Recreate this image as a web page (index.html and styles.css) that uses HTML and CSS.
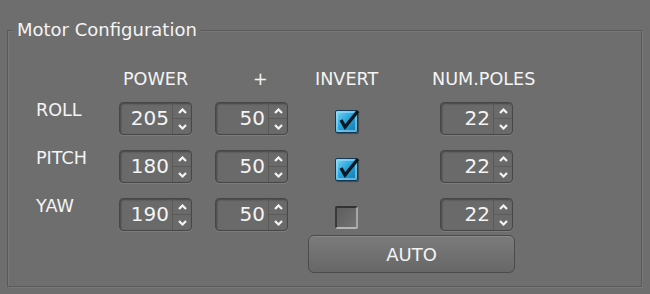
FILE: index.html
```html
<!DOCTYPE html>
<html lang="en">
  <head>
    <meta charset="UTF-8" />
    <title>Motor Configuration</title>
    <link rel="stylesheet" href="styles.css">
  </head>
  <body>
    <!-- Motor configuration group box -->
    <div class="panel">
      <div class="panel-title">Motor Configuration</div>
      <div class="motor-grid">
        <!-- Column headers -->
        <div></div>
        <div class="head head-power">POWER</div>
        <div class="head head-plus">+</div>
        <div class="head head-invert">INVERT</div>
        <div class="head head-poles">NUM.POLES</div>

        <!-- ROLL -->
        <div class="axis">ROLL</div>
        <div class="spin"><span class="spin-value">205</span><span class="spin-arrows"><span class="arrow"><svg width="9" height="6" viewBox="0 0 9 6"><polyline points="1,5 4.5,1.5 8,5" /></svg></span><span class="arrow"><svg width="9" height="6" viewBox="0 0 9 6"><polyline points="1,1 4.5,4.5 8,1" /></svg></span></span></div>
        <div class="spin"><span class="spin-value">50</span><span class="spin-arrows"><span class="arrow"><svg width="9" height="6" viewBox="0 0 9 6"><polyline points="1,5 4.5,1.5 8,5" /></svg></span><span class="arrow"><svg width="9" height="6" viewBox="0 0 9 6"><polyline points="1,1 4.5,4.5 8,1" /></svg></span></span></div>
        <div class="check checked"><svg width="26" height="26" viewBox="0 0 26 26"><polyline points="6,12 10,19 23,3" /></svg></div>
        <div class="spin"><span class="spin-value">22</span><span class="spin-arrows"><span class="arrow"><svg width="9" height="6" viewBox="0 0 9 6"><polyline points="1,5 4.5,1.5 8,5" /></svg></span><span class="arrow"><svg width="9" height="6" viewBox="0 0 9 6"><polyline points="1,1 4.5,4.5 8,1" /></svg></span></span></div>

        <!-- PITCH -->
        <div class="axis">PITCH</div>
        <div class="spin"><span class="spin-value">180</span><span class="spin-arrows"><span class="arrow"><svg width="9" height="6" viewBox="0 0 9 6"><polyline points="1,5 4.5,1.5 8,5" /></svg></span><span class="arrow"><svg width="9" height="6" viewBox="0 0 9 6"><polyline points="1,1 4.5,4.5 8,1" /></svg></span></span></div>
        <div class="spin"><span class="spin-value">50</span><span class="spin-arrows"><span class="arrow"><svg width="9" height="6" viewBox="0 0 9 6"><polyline points="1,5 4.5,1.5 8,5" /></svg></span><span class="arrow"><svg width="9" height="6" viewBox="0 0 9 6"><polyline points="1,1 4.5,4.5 8,1" /></svg></span></span></div>
        <div class="check checked"><svg width="26" height="26" viewBox="0 0 26 26"><polyline points="6,12 10,19 23,3" /></svg></div>
        <div class="spin"><span class="spin-value">22</span><span class="spin-arrows"><span class="arrow"><svg width="9" height="6" viewBox="0 0 9 6"><polyline points="1,5 4.5,1.5 8,5" /></svg></span><span class="arrow"><svg width="9" height="6" viewBox="0 0 9 6"><polyline points="1,1 4.5,4.5 8,1" /></svg></span></span></div>

        <!-- YAW -->
        <div class="axis">YAW</div>
        <div class="spin"><span class="spin-value">190</span><span class="spin-arrows"><span class="arrow"><svg width="9" height="6" viewBox="0 0 9 6"><polyline points="1,5 4.5,1.5 8,5" /></svg></span><span class="arrow"><svg width="9" height="6" viewBox="0 0 9 6"><polyline points="1,1 4.5,4.5 8,1" /></svg></span></span></div>
        <div class="spin"><span class="spin-value">50</span><span class="spin-arrows"><span class="arrow"><svg width="9" height="6" viewBox="0 0 9 6"><polyline points="1,5 4.5,1.5 8,5" /></svg></span><span class="arrow"><svg width="9" height="6" viewBox="0 0 9 6"><polyline points="1,1 4.5,4.5 8,1" /></svg></span></span></div>
        <div class="check"></div>
        <div class="spin"><span class="spin-value">22</span><span class="spin-arrows"><span class="arrow"><svg width="9" height="6" viewBox="0 0 9 6"><polyline points="1,5 4.5,1.5 8,5" /></svg></span><span class="arrow"><svg width="9" height="6" viewBox="0 0 9 6"><polyline points="1,1 4.5,4.5 8,1" /></svg></span></span></div>

        <!-- Auto button -->
        <button class="auto-btn">AUTO</button>
      </div>
    </div>
  </body>
</html>
```

FILE: styles.css
```css
/* Reset & Base */
* {
  box-sizing: border-box;
  margin: 0;
  padding: 0;
}
html,
body {
  height: 100%;
  background: #6e6e6e;
  color: #f4f4f4;
  font-family: "DejaVu Sans", sans-serif;
  overflow: hidden;
}
/* Group box */
.panel {
  margin: 30px 0 0 7px;
  width: 635px;
  height: 257px;
  padding-left: 28px;
  border: 1px solid #595959;
  box-shadow: 1px 1px 0 rgba(255, 255, 255, 0.07),
    inset 1px 1px 0 rgba(255, 255, 255, 0.07);
}
.panel-title {
  width: fit-content;
  margin: -12px 0 0 -23px;
  padding: 0 4px;
  background: #6e6e6e;
  font-size: 18px;
  line-height: 22px;
}
/* Grid of motor settings */
.motor-grid {
  display: grid;
  margin-top: 28px;
  grid-template-columns: 83px 96px 96px 129px 73px;
  grid-template-rows: 33px 48px 48px 37px 38px;
  align-items: start;
}
.head,
.axis {
  font-size: 17.6px;
  line-height: 20px;
  white-space: nowrap;
}
.head-power {
  padding-left: 4px;
}
.head-plus {
  padding-left: 38px;
}
.head-invert {
  padding-left: 4px;
}
.head-poles {
  margin-left: -8px;
}
.axis {
  margin-top: -2px;
}
/* Spin box */
.spin {
  display: flex;
  width: 73px;
  height: 33px;
  border: 1px solid #474747;
  border-radius: 4px;
  background: #6a6a6a;
  box-shadow: inset 1px 1px 2px rgba(0, 0, 0, 0.35),
    0 1px 0 rgba(255, 255, 255, 0.1);
}
.spin-value {
  flex: 1;
  padding-right: 3px;
  text-align: right;
  font-size: 20px;
  line-height: 31px;
}
.spin-arrows {
  width: 19px;
  display: flex;
  flex-direction: column;
  border-left: 1px solid #5a5a5a;
}
.arrow {
  flex: 1;
  display: flex;
  align-items: center;
  justify-content: center;
}
.arrow + .arrow {
  border-top: 1px solid #5a5a5a;
}
.arrow svg polyline {
  fill: none;
  stroke: #f4f4f4;
  stroke-width: 2.2;
}
/* Checkboxes */
.check {
  position: relative;
  width: 23px;
  height: 23px;
  margin: 8px 0 0 24px;
  border-radius: 2px;
  border: 2px solid;
  border-color: #333 #a6a6a6 #b4b4b4 #3a3a3a;
  background: linear-gradient(135deg, #5e5e5e, #727272);
}
.check.checked {
  border: 1px solid #123a55;
  background: linear-gradient(135deg, #7fd6f5 0%, #2aa6dc 45%, #1276b0 100%);
  box-shadow: inset 0 0 0 2px rgba(160, 225, 250, 0.55),
    1px 1px 1px rgba(0, 0, 0, 0.35);
}
/* Check mark sits over the box edge */
.check svg {
  position: absolute;
  left: -1px;
  top: -3px;
}
.check svg polyline {
  fill: none;
  stroke: #0c1720;
  stroke-width: 3.4;
  stroke-linejoin: miter;
}
/* Auto button */
.auto-btn {
  grid-column: 4 / 6;
  justify-self: stretch;
  height: 38px;
  margin: 0 -2px 0 -3px;
  border: 1px solid #4b4b4b;
  border-radius: 6px;
  background: linear-gradient(#7b7b7b, #676767);
  box-shadow: inset 0 1px 0 rgba(255, 255, 255, 0.12);
  color: #f4f4f4;
  font-family: "DejaVu Sans", sans-serif;
  font-size: 18px;
}
```
